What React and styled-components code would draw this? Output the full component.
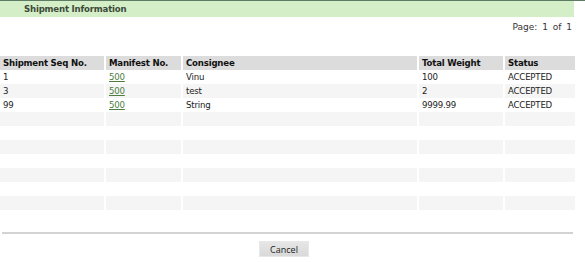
import React from "react";
import styled, { createGlobalStyle } from "styled-components";

const Global = createGlobalStyle`
  html, body { margin: 0; padding: 0; background: #fff; }
  body { font-family: "DejaVu Sans", Verdana, sans-serif; }
`;

const Page = styled.div`
  width: 585px;
  height: 262px;
  border-top: 1px solid #5d7c63;
  box-sizing: border-box;
  overflow: hidden;
`;

const Content = styled.div`
  width: 574px;
  display: flex;
  flex-direction: column;
`;

const TitleBar = styled.div`
  height: 16px;
  background: #d4efc8;
  display: flex;
  align-items: center;
  padding-left: 24px;
  font-size: 8.6px;
  letter-spacing: -0.2px;
  font-weight: bold;
  color: #3d4a3a;
`;

const PageInfo = styled.div`
  text-align: right;
  font-size: 9px;
  color: #333;
  margin-top: 3px;
  padding-right: 2px;
  height: 14px;
  line-height: 14px;
  word-spacing: 2px;
`;

const Table = styled.table`
  margin-top: 22px;
  width: 579px;
  table-layout: fixed;
  border-collapse: separate;
  border-spacing: 2px 0;
  margin-left: -2px;
  font-size: 8.6px;
  letter-spacing: -0.2px;
  color: #222;
`;

const Th = styled.th`
  background: #dcdcdc;
  height: 14px;
  padding: 0 3px;
  text-align: left;
  font-weight: bold;
  color: #111;
  white-space: nowrap;
  overflow: hidden;
`;

const Tr = styled.tr`
  background: ${(p) => (p.$alt ? "#f5f5f5" : "#fff")};
`;

const Td = styled.td`
  height: 14px;
  padding: 0 3px;
  line-height: 14px;
  background: inherit;
  white-space: nowrap;
`;

const Link = styled.a`
  color: #4e7d3e;
  text-decoration: underline;
`;

const Divider = styled.div`
  margin: 22px 0 0 2px;
  height: 2px;
  background: #d3d3d3;
  width: 571px;
`;

const Actions = styled.div`
  display: flex;
  justify-content: center;
  margin-top: 7px;
  padding-right: 6px;
`;

const Button = styled.button`
  width: 50px;
  height: 16px;
  padding: 0;
  border: 1px solid #e8e8e8;
  background: linear-gradient(#e6e6e6, #d9d9d9);
  font-family: "Open Sans", "Noto Sans", sans-serif;
  font-size: 9px;
  color: #222;
`;

const cols = [
  { label: "Shipment Seq No.", w: 104 },
  { label: "Manifest No.", w: 75 },
  { label: "Consignee", w: 234 },
  { label: "Total Weight", w: 84 },
  { label: "Status", w: 70 },
];

const rows = [
  ["1", "500", "Vinu", "100", "ACCEPTED"],
  ["3", "500", "test", "2", "ACCEPTED"],
  ["99", "500", "String", "9999.99", "ACCEPTED"],
];

export default function App() {
  const all = [...rows];
  while (all.length < 10) all.push(["", "", "", "", ""]);
  return (
    <>
      <Global />
      <Page>
        <Content>
          <TitleBar>Shipment Information</TitleBar>
          <PageInfo>Page: 1 of 1</PageInfo>
          <Table>
            <colgroup>
              {cols.map((c) => (
                <col key={c.label} style={{ width: c.w }} />
              ))}
            </colgroup>
            <thead>
              <tr>
                {cols.map((c) => (
                  <Th key={c.label}>{c.label}</Th>
                ))}
              </tr>
            </thead>
            <tbody>
              {all.map((r, i) => (
                <Tr key={i} $alt={i % 2 === 1}>
                  {r.map((v, j) => (
                    <Td key={j}>{j === 1 && v ? <Link href="#">{v}</Link> : v}</Td>
                  ))}
                </Tr>
              ))}
            </tbody>
          </Table>
          <Divider />
          <Actions>
            <Button>Cancel</Button>
          </Actions>
        </Content>
      </Page>
    </>
  );
}
